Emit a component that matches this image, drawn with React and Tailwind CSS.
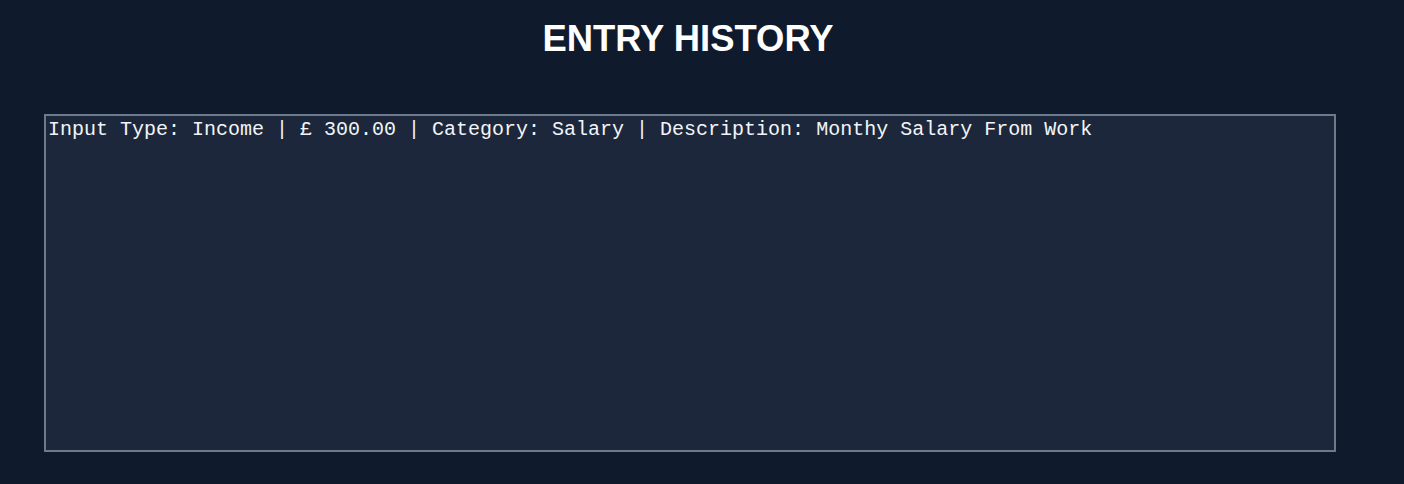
export default function App() {
  return (
    <div className="min-h-[484px] w-full bg-[#0f1b2c] pt-[18px] pb-[32px]">
      <h1
        className="pr-[28px] text-center text-[36.4px] font-bold leading-[41px] text-white"
        style={{ fontFamily: '"Liberation Sans", Arial, sans-serif' }}
      >
        ENTRY HISTORY
      </h1>
      <div className="ml-[44px] mt-[55px] h-[338px] w-[1292px] border-2 border-[#6b7a8d] bg-[#1d273b] px-[2px] py-[2px]">
        <div
          className="text-[20px] leading-[23px] text-[#f1f5f9] whitespace-pre"
          style={{ fontFamily: '"Liberation Mono", "Courier New", monospace' }}
        >
          Input Type: Income | £ 300.00 | Category: Salary | Description: Monthy Salary From Work
        </div>
      </div>
    </div>
  );
}
